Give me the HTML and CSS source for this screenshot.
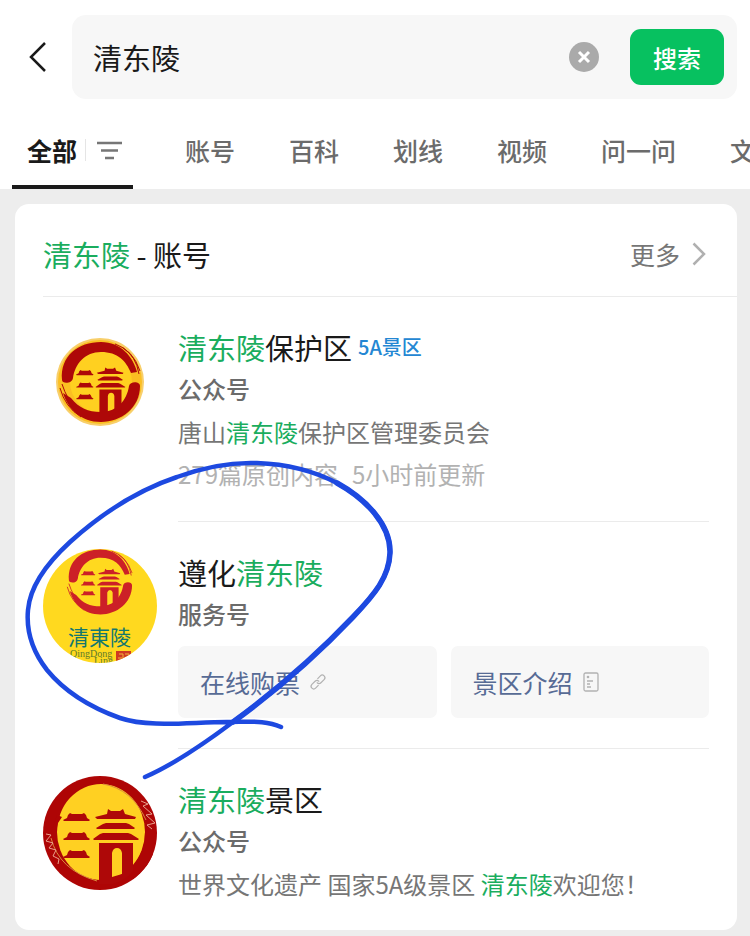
FILE: index.html
```html
<!DOCTYPE html>
<html lang="zh-CN">
<head>
<meta charset="utf-8">
<meta name="viewport" content="width=device-width, initial-scale=1">
<title>清东陵 - 搜索</title>
<link rel="stylesheet" href="styles.css">
</head>
<body>
<svg class="defs" aria-hidden="true">
  <defs>
    <g id="pagoda">
      <path id="roof" d="M25 39l2-2 2 1h10l2-1 2 2 1 3 3 2-1 1H21l-1-1 4-2z"/>
      <use href="#roof" y="19"/>
      <use href="#roof" y="37"/>
      <path d="M65 33l3 2h9l3-2 2 5 11 3-1 2H54l-2-2 12-3zM60 48l3-1h20l3 1 6 4-1 1H54l-1-1zM57 58l3-1h25l3 1 8 5-1 1H51l-1-1z"/>
      <path fill-rule="evenodd" d="M56 67h34v28q-8 10-20 13H56zM69 101V77q1-5 5-5t5 5v21z"/>
    </g>
    <g id="ring">
      <path d="M19 56C17 32 35 18 58 18C78 18 90 33 94 48L88 49C83 37 75 28 58 28C42 28 32 40 30 54C29 60 19 60 19 56zM97 62C97 84 78 98 58 98C38 98 25 85 20 69L28 74C36 84 45 88 58 88C74 88 84 76 86 62C87 57 97 57 97 62z"/>
      <path d="M72 20Q90 26 97 47M80 24Q93 32 96 50M17 64Q22 83 38 93M19 60Q24 76 34 85" fill="none" stroke="currentColor" stroke-width="1"/>
    </g>
  </defs>
</svg>

<header class="top">
  <form class="search-row">
    <a class="back" href="#" aria-label="返回">
      <svg width="20" height="34" viewBox="0 0 20 34"><path d="M17 3L3 17l14 14" fill="none" stroke="#1a1a1a" stroke-width="2.5"/></svg>
    </a>
    <div class="search-box">
      <input class="search-input" type="text" value="清东陵" aria-label="搜索">
      <button class="clear" type="button" aria-label="清除">
        <svg width="30" height="30" viewBox="0 0 30 30"><circle cx="15" cy="15" r="15" fill="#aaa"/><path d="M10 10l10 10M20 10L10 20" stroke="#fff" stroke-width="3"/></svg>
      </button>
      <button class="submit" type="submit">搜索</button>
    </div>
  </form>
  <nav class="tabs">
    <a class="tab tab-active" href="#">全部<span class="filter"><svg width="25" height="19" viewBox="0 0 25 19"><path d="M0 2h25M4 9.5h17M8 17h9" stroke="#767676" stroke-width="2.4"/></svg></span></a>
    <a class="tab" href="#">账号</a>
    <a class="tab" href="#">百科</a>
    <a class="tab" href="#">划线</a>
    <a class="tab" href="#">视频</a>
    <a class="tab" href="#">问一问</a>
    <a class="tab" href="#">文章</a>
  </nav>
</header>

<main class="card">
  <div class="card-head">
    <h1 class="card-title"><em>清东陵</em> - 账号</h1>
    <a class="more" href="#">更多
      <svg width="14" height="24" viewBox="0 0 14 24"><path d="M1.5 1.5L12 12 1.5 22.5" fill="none" stroke="#b0b0b0" stroke-width="2.5"/></svg>
    </a>
  </div>
  <ul class="list">
    <li class="item">
      <svg class="avatar avatar-dark" viewBox="0 0 114 114" aria-hidden="true">
        <circle cx="57" cy="58" r="44" fill="#f8cf6a"/>
        <circle cx="57" cy="58" r="42" fill="#fbbf22"/>
        <circle cx="58" cy="58" r="31" fill="#ffd020"/>
        <use href="#ring"/>
        <use href="#pagoda" transform="translate(20 22) scale(.65)"/>
      </svg>
      <div class="body">
        <h2 class="name"><span><em>清东陵</em>保护区</span><span class="tag">5A景区</span></h2>
        <p class="kind">公众号</p>
        <p class="desc">唐山<em>清东陵</em>保护区管理委员会</p>
        <p class="meta"><span>279篇原创内容</span><span>5小时前更新</span></p>
      </div>
    </li>
    <li class="item">
      <svg class="avatar avatar-round avatar-red" viewBox="0 0 114 114">
        <rect width="114" height="114" fill="#ffd91f"/>
        <use href="#ring" transform="translate(10.5 -14) scale(.81)"/>
        <use href="#pagoda" transform="translate(27 2) scale(.54)"/>
        <text class="logo-cn" x="25" y="96">清東陵</text>
        <text class="logo-en" x="27" y="108">QingDong</text>
        <text class="logo-en" x="51" y="115">Ling</text>
        <rect x="73" y="102" width="15" height="12" fill="#cf3a22"/>
        <path d="M76 105h4v8M79 109h-4M82 105h4v8M82 109h4" fill="none" stroke="#f4b43a"/>
      </svg>
      <div class="body">
        <h2 class="name"><span>遵化<em>清东陵</em></span></h2>
        <p class="kind">服务号</p>
        <div class="links">
          <a class="link" href="#">在线购票
            <svg width="18" height="18" viewBox="-12 -12 24 24" fill="none" stroke="#b2b2b2" stroke-width="1.6" stroke-linecap="round"><g transform="rotate(-45)"><path d="M-3 3.500H-8a3.500 3.500 0 0 1 0-7h6A3.500 3.500 0 0 1 1.500 0M3-3.500H8a3.500 3.500 0 0 1 0 7H2A3.500 3.500 0 0 1-1.500 0"/></g></svg>
          </a>
          <a class="link" href="#">景区介绍
            <svg width="18" height="20" viewBox="0 0 18 20" fill="none" stroke="#b2b2b2" stroke-width="1.3"><rect x="2" y="1" width="14" height="18" rx="1.5"/><path d="M5 9h6M5 12h3M5 15h4"/><circle cx="6" cy="5" r="1.3" fill="#b2b2b2" stroke="none"/></svg>
          </a>
        </div>
      </div>
    </li>
    <li class="item">
      <svg class="avatar avatar-round avatar-dark" viewBox="0 0 114 114" aria-hidden="true">
        <rect width="114" height="114" fill="#ae0505"/>
        <ellipse cx="58" cy="56" rx="44" ry="48" fill="#ffd022"/>
        <path d="M14 57q-1-5 1-10l4-6-5-2-6 18zM102 56q1 18-12 34v14l20-20V50z" fill="#ae0505"/>
        <path d="M60 8q29 5 43 36M8 62q8 32 46 43" fill="none" stroke="#d98a3c" stroke-width="1"/>
        <path d="M98 25l7 3-5 2 9 8-6 1 9 8-8 2 5 4M3 58l5 1-5 6 7 2-4 5 7 2-3 6 6 3-1 5" fill="none" stroke="#e8a08c" stroke-width="1"/>
        <use href="#pagoda"/>
      </svg>
      <div class="body">
        <h2 class="name"><span><em>清东陵</em>景区</span></h2>
        <p class="kind">公众号</p>
        <p class="desc">世界文化遗产 国家5A级景区 <em>清东陵</em>欢迎您！</p>
      </div>
    </li>
  </ul>
  <svg class="scribble" width="400" height="350" viewBox="10 440 400 350" aria-hidden="true">
    <g fill="none" stroke="#1d49e0" stroke-linecap="round">
      <path stroke-width="4.5" d="M281 727C266 720 250 722 227 722C190 722 150 728 120 718C92 708 65 692 47 670C33 652 26 632 28 610C30 586 46 564 70 542C100 515 138 490 177 477C204 467 230 462 257 463C285 464 312 470 337 483C366 499 391 525 390 553C389 577 375 594 353 617C315 657 277 690 233 722C205 743 175 764 145 777"/>
      <path stroke-width="5.5" d="M337 483C366 499 391 525 390 553C389 577 375 594 353 617C315 657 277 690 233 722"/>
    </g>
  </svg>
</main>
</body>
</html>
```

FILE: styles.css
```css
* { box-sizing: border-box; }
body {
  margin: 0;
  background: #ededed;
  color: #1a1a1a;
  font-family: "Noto Sans CJK SC", sans-serif;
  overflow-x: hidden;
}
h1, h2, p, ul { margin: 0; padding: 0; font-weight: 400; }
ul { list-style: none; }
a { color: inherit; text-decoration: none; }
em { font-style: normal; color: #1aad5e; }
svg { display: block; flex: none; }
button { border: 0; padding: 0; font-family: inherit; cursor: pointer; }
.defs { position: absolute; width: 0; height: 0; }

.top { background: #fff; padding-top: 15px; }
.search-row { display: flex; align-items: center; padding-right: 13px; }
.back { width: 72px; padding-left: 28px; flex: none; }
.search-box {
  flex: 1;
  display: flex;
  align-items: center;
  min-width: 0;
  height: 84px;
  padding: 0 13px 0 21px;
  border-radius: 14px;
  background: #f7f7f7;
}
.search-input {
  flex: 1;
  min-width: 0;
  padding: 0;
  border: 0;
  outline: 0;
  background: none;
  color: #1a1a1a;
  font-family: inherit;
  font-size: 29px;
}
.clear { background: none; margin-right: 31px; }
.submit {
  width: 94px;
  height: 56px;
  border-radius: 11px;
  background: #07c160;
  color: #fff;
  font-size: 24px;
  font-weight: 500;
}
.tabs { display: flex; gap: 54px; height: 90px; padding-left: 12px; overflow: hidden; }
.tab {
  flex: none;
  padding-top: 33px;
  color: #6b6b6b;
  font-size: 25px;
  font-weight: 500;
  line-height: 36px;
  white-space: nowrap;
}
.tab-active {
  display: flex;
  align-items: flex-start;
  padding-left: 15px;
  padding-right: 11px;
  margin-right: -2px;
  border-bottom: 4px solid #1a1a1a;
  color: #1a1a1a;
  font-weight: 700;
}
.filter {
  display: flex;
  align-items: center;
  height: 22px;
  margin-top: 7px;
  margin-left: 8px;
  padding-left: 11px;
  border-left: 1px solid #e5e5e5;
}

.card {
  position: relative;
  margin: 15px 13px 6px 15px;
  border-radius: 14px;
  background: #fff;
}
.card-head {
  display: flex;
  justify-content: space-between;
  align-items: center;
  height: 93px;
  margin-left: 28px;
  padding: 7px 31px 0 0;
  border-bottom: 1px solid #ebebeb;
}
.card-title { font-size: 29px; line-height: 42px; }
.more {
  display: flex;
  align-items: center;
  gap: 12px;
  color: #767676;
  font-size: 25px;
  line-height: 36px;
}
.item { display: flex; gap: 21px; padding: 27px 28px 0; }
.avatar { width: 114px; height: 114px; }
.avatar-round { border-radius: 50%; }
.avatar-dark { color: #ae0808; fill: #ae0808; }
.avatar-red { color: #cc2027; fill: #cc2027; }
.body { flex: 1; min-width: 0; padding: 2px 0 26px; border-bottom: 1px solid #ebebeb; }
.item:last-child .body { border-bottom: 0; padding-bottom: 25px; }
.name { display: flex; align-items: center; gap: 6px; font-size: 29px; line-height: 42px; }
.tag { color: #2487d3; font-size: 20px; font-weight: 500; }
.kind { color: #6b6b6b; font-size: 24px; font-weight: 500; line-height: 42px; }
.desc { color: #767676; font-size: 24px; line-height: 43px; }
.meta { display: flex; gap: 14px; color: #b2b2b2; font-size: 24px; line-height: 42px; }
.links { display: flex; gap: 14px; margin: 11px 0 4px; }
.link {
  flex: 1;
  display: flex;
  align-items: center;
  gap: 9px;
  height: 72px;
  padding: 0 22px;
  border-radius: 7px;
  background: #f7f7f7;
  color: #576b95;
  font-size: 25px;
}
.logo-cn { font-size: 21px; fill: #13776f; }
.logo-en { font-family: "Liberation Serif", serif; font-size: 10px; fill: #5d7a2c; }
.scribble { position: absolute; left: -5px; top: 236px; pointer-events: none; }
```
